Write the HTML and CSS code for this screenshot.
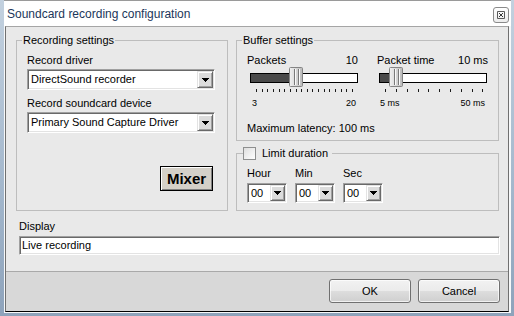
FILE: index.html
```html
<!DOCTYPE html>
<html>
<head>
<meta charset="utf-8">
<link rel="stylesheet" href="styles.css">
</head>
<body>
<div class="window">
  <div class="titlebar">
    <span class="title">Soundcard recording configuration</span>
    <span class="close"><svg width="8" height="8" viewBox="0 0 8 8"><path d="M0.5 0.5h7v7h-7z" fill="none" stroke="#5a5a5a"/><path d="M2 2l4 4M6 2l-4 4" stroke="#3a3a3a"/></svg></span>
  </div>
  <div class="client">
    <div class="main">
      <div class="groups">
        <fieldset class="group rec">
          <legend class="legend">Recording settings</legend>
          <div class="rec-body">
            <div class="field-label">Record driver</div>
            <div class="combo wide"><span class="combo-text">DirectSound recorder</span><span class="combo-btn"><svg width="7" height="4" viewBox="0 0 7 4"><path d="M0 0h7v1h-1v1h-1v1h-1v1h-1v-1h-1v-1h-1v-1h-1z" fill="#000"/></svg></span></div>
            <div class="field-label">Record soundcard device</div>
            <div class="combo wide"><span class="combo-text">Primary Sound Capture Driver</span><span class="combo-btn"><svg width="7" height="4" viewBox="0 0 7 4"><path d="M0 0h7v1h-1v1h-1v1h-1v1h-1v-1h-1v-1h-1v-1h-1z" fill="#000"/></svg></span></div>
            <div class="mixer-row"><button class="mixer">Mixer</button></div>
          </div>
        </fieldset>
        <div class="right-col">
          <fieldset class="group buffer">
            <legend class="legend">Buffer settings</legend>
            <div class="buffer-body">
              <div class="sliders">
                <div class="slider-col">
                  <div class="slider-head"><span>Packets</span><span>10</span></div>
                  <svg class="slider" width="111" height="30" viewBox="0 0 111 30">
                    <defs>
                      <linearGradient id="thumbA" x1="0" x2="1" y1="0" y2="0">
                        <stop offset="0" stop-color="#f2f2f2"/>
                        <stop offset="0.5" stop-color="#d8d8d8"/>
                        <stop offset="1" stop-color="#b9b9b9"/>
                      </linearGradient>
                    </defs>
                    <rect x="3.5" y="6.5" width="107" height="9" fill="#fff" stroke="#000"/>
                    <rect x="4" y="7" width="39" height="8" fill="#4a4a4a"/>
                    <rect x="42.5" y="0.5" width="13" height="19" rx="1" fill="url(#thumbA)" stroke="#858585"/>
                    <path d="M47.5 2v16M51.5 2v16" stroke="#7a7a7a"/>
                    <path d="M48.5 2v16M52.5 2v16" stroke="#fafafa"/>
                    <path d="M9.5 22v3M15.5 22v3M20.5 22v3M26.5 22v3M32.5 22v3M37.5 22v3M43.5 22v3M49.5 22v3M54.5 22v3M60.5 22v3M65.5 22v3M71.5 22v3M77.5 22v3M82.5 22v3M88.5 22v3M94.5 22v3M99.5 22v3M105.5 22v3" stroke="#1a1a1a"/>
                  </svg>
                  <div class="slider-scale s1"><span>3</span><span>20</span></div>
                </div>
                <div class="slider-col">
                  <div class="slider-head"><span>Packet time</span><span>10 ms</span></div>
                  <svg class="slider" width="111" height="30" viewBox="0 0 111 30">
                    <defs>
                      <linearGradient id="thumbB" x1="0" x2="1" y1="0" y2="0">
                        <stop offset="0" stop-color="#f2f2f2"/>
                        <stop offset="0.5" stop-color="#d8d8d8"/>
                        <stop offset="1" stop-color="#b9b9b9"/>
                      </linearGradient>
                    </defs>
                    <rect x="2.5" y="6.5" width="107" height="9" fill="#fff" stroke="#000"/>
                    <rect x="3" y="7" width="10" height="8" fill="#4a4a4a"/>
                    <rect x="12.5" y="0.5" width="13" height="19" rx="1" fill="url(#thumbB)" stroke="#858585"/>
                    <path d="M17.5 2v16M21.5 2v16" stroke="#7a7a7a"/>
                    <path d="M18.5 2v16M22.5 2v16" stroke="#fafafa"/>
                    <path d="M8.5 22v3M19.5 22v3M30.5 22v3M41.5 22v3M51.5 22v3M62.5 22v3M73.5 22v3M84.5 22v3M95.5 22v3M105.5 22v3" stroke="#1a1a1a"/>
                  </svg>
                  <div class="slider-scale s2"><span>5 ms</span><span>50 ms</span></div>
                </div>
              </div>
              <div class="latency">Maximum latency: 100 ms</div>
            </div>
          </fieldset>
          <fieldset class="group limit">
            <legend class="legend limit-legend"><span class="checkbox"></span>Limit duration</legend>
            <div class="limit-body">
              <div class="time-field">
                <div class="field-label">Hour</div>
                <div class="combo small"><span class="combo-text">00</span><span class="combo-btn"><svg width="7" height="4" viewBox="0 0 7 4"><path d="M0 0h7v1h-1v1h-1v1h-1v1h-1v-1h-1v-1h-1v-1h-1z" fill="#000"/></svg></span></div>
              </div>
              <div class="time-field">
                <div class="field-label">Min</div>
                <div class="combo small"><span class="combo-text">00</span><span class="combo-btn"><svg width="7" height="4" viewBox="0 0 7 4"><path d="M0 0h7v1h-1v1h-1v1h-1v1h-1v-1h-1v-1h-1v-1h-1z" fill="#000"/></svg></span></div>
              </div>
              <div class="time-field">
                <div class="field-label">Sec</div>
                <div class="combo small"><span class="combo-text">00</span><span class="combo-btn"><svg width="7" height="4" viewBox="0 0 7 4"><path d="M0 0h7v1h-1v1h-1v1h-1v1h-1v-1h-1v-1h-1v-1h-1z" fill="#000"/></svg></span></div>
              </div>
            </div>
          </fieldset>
        </div>
      </div>
      <div class="display">
        <div class="field-label">Display</div>
        <div class="textbox">Live recording</div>
      </div>
    </div>
    <div class="buttons">
      <button class="btn">OK</button>
      <button class="btn">Cancel</button>
    </div>
  </div>
</div>
</body>
</html>
```
FILE: styles.css
```css
html, body {
  margin: 0;
  padding: 0;
}
body {
  width: 514px;
  height: 316px;
  overflow: hidden;
  background: linear-gradient(180deg, #c3d1df 0%, #a3b7cc 60%, #8ea3bb 100%);
  font-family: "Liberation Sans", Arial, sans-serif;
  font-size: 11px;
  color: #000;
}
.window {
  margin-left: 4px;
  width: 507px;
  height: 313px;
  box-sizing: border-box;
  padding-bottom: 1px;
  background: #f7f8f9;
  display: flex;
  flex-direction: column;
}
.titlebar {
  height: 26px;
  box-sizing: border-box;
  border-top: 1px solid #9a9a9a;
  background: #fff;
  display: flex;
  justify-content: space-between;
  align-items: flex-start;
  padding: 0 2px 0 3px;
}
.title {
  font-size: 12px;
  line-height: 15px;
  margin-top: 6px;
  color: #1b365a;
}
.close {
  margin-top: 6px;
  width: 16px;
  height: 16px;
  box-sizing: border-box;
  border: 1px solid #8a8a8a;
  border-radius: 3px;
  background: linear-gradient(#ffffff, #ececec);
  display: flex;
  align-items: center;
  justify-content: center;
}
.close svg { display: block; }
.client {
  flex: 1;
  margin: 0 2px 0 1px;
  border: 1px solid #707070;
  border-top-color: #a5a5a5;
  border-bottom-color: #000;
  background: #e9e9e9;
  display: flex;
  flex-direction: column;
}
.main {
  height: 244px;
  box-sizing: border-box;
  padding-top: 7px;
}
.groups {
  display: flex;
  gap: 8px;
  padding: 0 9px 0 10px;
}
.group {
  margin: 0;
  padding: 0;
  min-width: 0;
  border: 1px solid #bdbdbd;
  box-sizing: border-box;
}
.legend {
  padding: 0 1px;
  margin-left: 5px;
  line-height: 13px;
  font-size: 11px;
}
.rec { width: 212px; }
.rec-body { padding: 7px 12px 0 10px; }
.field-label {
  line-height: 13px;
  margin-bottom: 2px;
  white-space: nowrap;
}
.combo {
  display: flex;
  height: 21px;
  box-sizing: border-box;
  border: 1px solid;
  border-color: #a0a0a0 #ffffff #ffffff #a0a0a0;
  box-shadow: inset 1px 1px 0 #696969, inset -1px -1px 0 #e3e3e3;
  background: #fff;
  padding: 1px;
}
.combo.wide { margin-bottom: 7px; }
.combo.small { width: 40px; height: 20px; }
.combo-text {
  flex: 1;
  padding-left: 2px;
  line-height: 17px;
  white-space: nowrap;
  overflow: hidden;
}
.combo.small .combo-text { line-height: 16px; }
.combo-btn {
  width: 16px;
  box-sizing: border-box;
  background: #dcdcdc;
  border: 1px solid;
  border-color: #e3e3e3 #696969 #696969 #e3e3e3;
  box-shadow: inset 1px 1px 0 #fff, inset -1px -1px 0 #a0a0a0;
  display: flex;
  align-items: center;
  justify-content: center;
}
.combo.small .combo-btn { width: 15px; }
.combo-btn svg { display: block; }
.mixer-row {
  display: flex;
  justify-content: flex-end;
  padding-right: 2px;
  margin-top: 33px;
}
.mixer {
  width: 53px;
  height: 25px;
  padding: 0;
  border: 1px solid #000;
  background: #d4d0c8;
  box-shadow: inset 1px 1px 0 #fff, inset -1px -1px 0 #808080;
  font-family: "Liberation Sans", Arial, sans-serif;
  font-weight: bold;
  font-size: 15px;
  color: #000;
}
.right-col {
  width: 263px;
  display: flex;
  flex-direction: column;
  gap: 6px;
}
.buffer-body { padding: 7px 10px 5px 10px; }
.sliders {
  display: flex;
  justify-content: space-between;
}
.slider-col { width: 111px; }
.slider-head {
  display: flex;
  justify-content: space-between;
  line-height: 13px;
  white-space: nowrap;
}
.slider { display: block; }
.slider-scale {
  display: flex;
  justify-content: space-between;
  font-size: 9px;
  line-height: 13px;
}
.slider-scale.s1 { padding: 0 2px 0 5px; }
.slider-scale.s2 { padding: 0 3px 0 3px; }
.latency {
  margin-top: 12px;
  line-height: 13px;
}
.limit-legend {
  margin-left: 6px;
  padding: 0 4px 0 0;
}
.checkbox {
  display: inline-block;
  width: 13px;
  height: 13px;
  box-sizing: border-box;
  border: 1px solid #8e8f8f;
  background: linear-gradient(135deg, #dedede, #ffffff);
  vertical-align: top;
  margin-right: 6px;
}
.limit-body {
  display: flex;
  gap: 8px;
  padding: 7px 10px 7px 10px;
}
.time-field { width: 40px; }
.time-field .field-label { margin-bottom: 3px; }
.display {
  padding: 0 8px 0 13px;
  margin-top: 9px;
}
.display .field-label { margin-bottom: 3px; }
.textbox {
  height: 19px;
  box-sizing: border-box;
  border: 1px solid;
  border-color: #a0a0a0 #ffffff #ffffff #a0a0a0;
  box-shadow: inset 1px 1px 0 #696969, inset -1px -1px 0 #e3e3e3;
  background: #fff;
  padding: 1px 2px;
  line-height: 15px;
}
.buttons {
  flex: 1;
  border-top: 1px solid #a9a9a9;
  background: #d8d8d8;
  display: flex;
  justify-content: flex-end;
  align-items: flex-start;
  gap: 7px;
  padding: 7px 8px 0 0;
}
.btn {
  width: 82px;
  height: 24px;
  padding: 0;
  border: 1px solid #707070;
  border-radius: 3px;
  background: linear-gradient(#f2f2f2 0%, #ebebeb 48%, #dddddd 52%, #cfcfcf 100%);
  box-shadow: inset 0 0 0 1px rgba(255,255,255,0.7);
  font-family: "Liberation Sans", Arial, sans-serif;
  font-size: 11px;
  color: #000;
}
```
